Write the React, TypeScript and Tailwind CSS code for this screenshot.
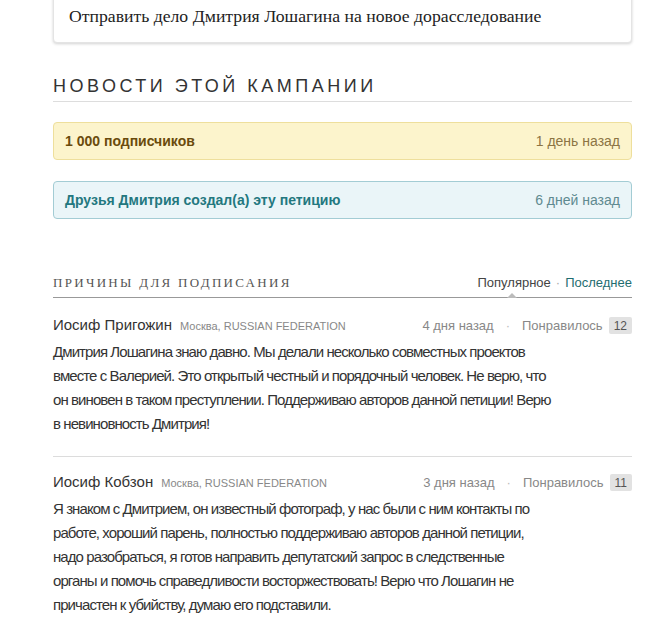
import React from "react";

const sans = { fontFamily: '"Liberation Sans", Arial, sans-serif' };
const serif = { fontFamily: '"Liberation Serif", "Times New Roman", serif' };

function Comment({
  name,
  time,
  likes,
  lines,
  last,
  first,
}: {
  name: string;
  time: string;
  likes: number;
  lines: string[];
  last?: boolean;
  first?: boolean;
}) {
  return (
    <div
      className={`${first ? "pt-[16px]" : "pt-[14px]"} pb-[20px] ${
        last ? "" : "border-b border-[#dcdcdc]"
      }`}
    >
      <div className="flex items-center justify-between h-[24px]">
        <div className="flex items-baseline gap-[8px]">
          <span className="text-[15px] text-[#333]">{name}</span>
          <span className="text-[11px] text-[#888]">Москва, RUSSIAN FEDERATION</span>
        </div>
        <div className="flex items-center text-[13px] text-[#888]">
          <span>{time}</span>
          <span className="mx-[12px] text-[#bbb]">·</span>
          <span>Понравилось</span>
          <span className="ml-[6px] inline-flex items-center justify-center h-[17px] px-[5px] bg-[#e2e2e2] text-[#555] text-[12px] rounded-[2px]">
            {likes}
          </span>
        </div>
      </div>
      <p className="mt-[2px] text-[15px] leading-[24px] tracking-[-0.92px] text-[#333]">
        {lines.map((l, i) => (
          <React.Fragment key={i}>
            {l}
            {i < lines.length - 1 && <br />}
          </React.Fragment>
        ))}
      </p>
    </div>
  );
}

export default function App() {
  return (
    <div className="w-[662px] h-[622px] bg-white overflow-hidden" style={sans}>
      <div className="ml-[53px] w-[579px]">
        <div className="-mt-[10px] h-[53px] bg-white rounded-[4px] border border-[#e4e4e4] shadow-[0_1px_3px_rgba(0,0,0,0.18)] flex items-center pl-[15px]">
          <span className="text-[17.7px] text-[#222]" style={serif}>
            Отправить дело Дмитрия Лошагина на новое дорасследование
          </span>
        </div>

        <div className="mt-[32px] pb-[4px] border-b border-[#dddddd]">
          <h2 className="text-[18px] leading-[22px] tracking-[3.5px] text-[#333]">
            НОВОСТИ ЭТОЙ КАМПАНИИ
          </h2>
        </div>

        <div className="mt-[20px] h-[38px] flex items-center justify-between px-[11px] rounded-[4px] bg-[#fcf4cc] border border-[#eedf9c]">
          <span className="text-[14px] font-bold text-[#6a4b0c]">1 000 подписчиков</span>
          <span className="text-[14px] text-[#8c7444]">1 день назад</span>
        </div>

        <div className="mt-[21px] h-[38px] flex items-center justify-between px-[11px] rounded-[4px] bg-[#eaf5f8] border border-[#a3ccd4]">
          <span className="text-[14px] font-bold text-[#23787f]">Друзья Дмитрия создал(а) эту петицию</span>
          <span className="text-[14px] text-[#5f8a90]">6 дней назад</span>
        </div>

        <div className="mt-[54px] relative flex items-end justify-between pb-[4px] border-b border-[#999]">
          <span className="text-[13px] tracking-[2.3px] text-[#555]" style={serif}>
            ПРИЧИНЫ ДЛЯ ПОДПИСАНИЯ
          </span>
          <div className="flex items-center text-[13px]">
            <span className="text-[#444]">Популярное</span>
            <span className="mx-[5px] text-[#aaa]">·</span>
            <span className="text-[#1f6d70]">Последнее</span>
          </div>
          <div className="absolute right-[115px] -bottom-[1px] w-0 h-0 border-l-[5px] border-r-[5px] border-b-[5px] border-l-transparent border-r-transparent border-b-[#bbb]" />
        </div>

        <Comment
          first
          name="Иосиф Пригожин"
          time="4 дня назад"
          likes={12}
          lines={[
            "Дмитрия Лошагина знаю давно. Мы делали несколько совместных проектов",
            "вместе с Валерией. Это открытый честный и порядочный человек. Не верю, что",
            "он виновен в таком преступлении. Поддерживаю авторов данной петиции! Верю",
            "в невиновность Дмитрия!",
          ]}
        />
        <Comment
          name="Иосиф Кобзон"
          time="3 дня назад"
          likes={11}
          last
          lines={[
            "Я знаком с Дмитрием, он известный фотограф, у нас были с ним контакты по",
            "работе, хороший парень, полностью поддерживаю авторов данной петиции,",
            "надо разобраться, я готов направить депутатский запрос в следственные",
            "органы и помочь справедливости восторжествовать! Верю что Лошагин не",
            "причастен к убийству, думаю его подставили.",
          ]}
        />
      </div>
    </div>
  );
}
